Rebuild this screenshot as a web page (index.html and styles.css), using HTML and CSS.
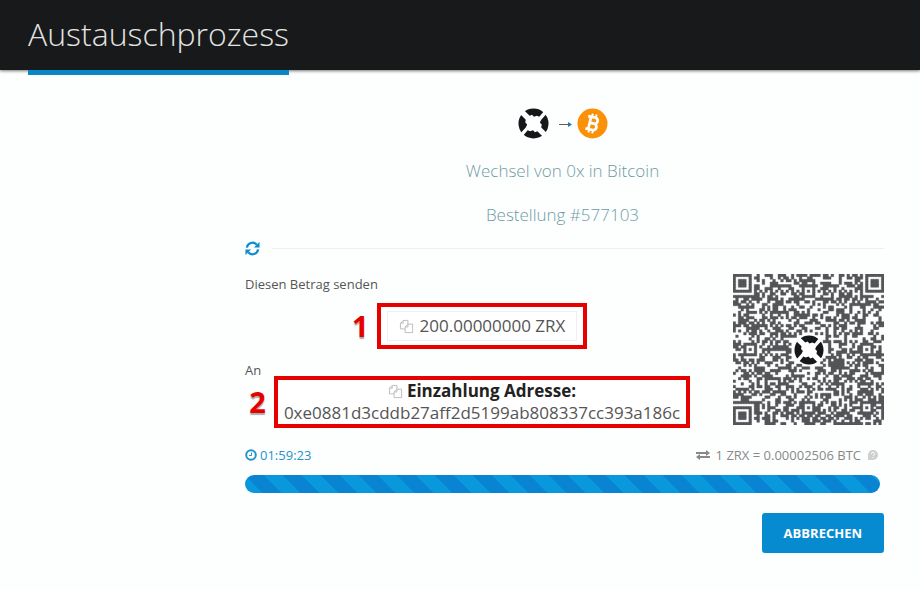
FILE: index.html
```html
<!DOCTYPE html>
<html lang="de">
<head>
  <meta charset="UTF-8">
  <meta name="viewport" content="width=device-width, initial-scale=1.0">
  <title>Austauschprozess</title>
  <link rel="stylesheet" href="styles.css">
</head>
<body>
  <svg class="sprite" aria-hidden="true">
    <symbol id="zrx" viewBox="0 0 32 32">
      <circle cx="16" cy="16" r="15.5" fill="#15181b"/>
      <path fill="#fff" d="M2 6 6 2l6 6 2.500-1 2 2 3-1L22 9l5-6 2.500 3L24 12l-1.500 3 2 2-.5 3L30 26l-4 4-6-6-2.500 1-2-2-3 1L10 23l-5 6-2.500-3L8 20l1.500-3-2-2L8 12z"/>
    </symbol>
    <symbol id="copy" viewBox="0 0 16 16">
      <path fill="#fff" stroke="currentColor" stroke-width="1" d="M4.500 1.500h5v9h-8v-6zM4.500 1.500v3h-3"/>
      <path fill="#fff" stroke="currentColor" stroke-width="1" d="M9.500 5.500h5v9h-8v-6zM9.500 5.500v3h-3"/>
    </symbol>
  </svg>

  <header class="header">
    <h1 class="title">Austauschprozess</h1>
  </header>

  <main class="content">
    <div class="summary">
      <div class="coins">
        <svg class="coin"><use href="#zrx"/></svg>
        <svg class="arrow" viewBox="0 0 13 8"><path fill="none" stroke="#555f68" d="M0 4.500h11"/><path fill="#2377b5" d="M9 2l4 2.500L9 7z"/></svg>
        <svg class="coin" viewBox="0 0 32 32">
          <circle cx="16" cy="16" r="15.500" fill="#fb9108"/>
          <g transform="rotate(13 16 16)" fill="none" stroke="#fff">
            <path stroke-width="2.800" d="M10 9.500h7.500a3 3 0 0 1 0 6.300H13M17.500 15.800a3.300 3.300 0 0 1 0 6.700H10M13 9.500v13"/>
            <path stroke-width="2" d="M14 6v3M18 6v3M14 23v3M18 23v3"/>
          </g>
        </svg>
      </div>
      <p>Wechsel von 0x in Bitcoin</p>
      <p>Bestellung #577103</p>
    </div>

    <div class="divider">
      <button class="refresh" aria-label="Aktualisieren">
        <svg viewBox="0 0 16 16"><path fill="none" stroke="currentColor" stroke-width="2.400" d="M2 7a6 6 0 0 1 10.500-3M14 9a6 6 0 0 1-10.500 3"/><path fill="currentColor" d="M15.500 1v6h-6zM.5 15V9h6z"/></svg>
      </button>
      <span class="rule"></span>
    </div>

    <div class="payment">
      <div class="details">
        <p class="label">Diesen Betrag senden</p>
        <div class="mark">
          <span class="number">1</span>
          <button class="amount"><svg class="copy"><use href="#copy"/></svg>200.00000000 ZRX</button>
        </div>
        <p class="label">An</p>
        <div class="mark address">
          <span class="number">2</span>
          <button class="address-title"><svg class="copy"><use href="#copy"/></svg>Einzahlung Adresse:</button>
          <p>0xe0881d3cddb27aff2d5199ab808337cc393a186c</p>
        </div>
      </div>
      <div class="qr">
        <svg id="qr" viewBox="0 0 57 57" role="img" aria-label="QR"></svg>
        <svg class="qr-logo"><use href="#zrx"/></svg>
      </div>
    </div>

    <div class="status">
      <span class="timer"><svg class="clock" viewBox="0 0 12 12"><circle cx="6" cy="6" r="4.800" fill="none" stroke="currentColor" stroke-width="2"/><path fill="none" stroke="currentColor" d="M6.500 3.500v3H4"/></svg>01:59:23</span>
      <span class="rate">
        <svg class="swap" viewBox="0 0 14 10"><path fill="none" stroke="currentColor" stroke-width="2" d="M0 3h11M3 7h11"/><path fill="currentColor" d="M10 0l4 3-4 3zM4 4 0 7l4 3z"/></svg>
        1 ZRX = 0.00002506 BTC
        <svg class="info" viewBox="0 0 12 12"><path fill="#cfcfcf" d="M6 1a5 5 0 1 1 0 10H1V6a5 5 0 0 1 5-5z"/><path fill="none" stroke="#fff" d="M4.500 5a1.500 1.500 0 1 1 2 1.300L6 7M6 8v1"/></svg>
      </span>
    </div>
    <div class="progress" role="progressbar" aria-label="Restzeit"></div>
    <div class="actions">
      <button class="cancel">ABBRECHEN</button>
    </div>
  </main>

  <script src="qr.js"></script>
</body>
</html>
```
FILE: styles.css
```css
* {
  box-sizing: border-box;
}

body {
  margin: 0;
  background: #fdfffe;
  color: #555;
  font-family: 'Open Sans', sans-serif;
  font-size: 13px;
  line-height: 20px;
}

p {
  margin: 0;
}

svg {
  display: block;
  flex: none;
}

button {
  border: none;
  padding: 0;
  background: none;
  color: inherit;
  font: inherit;
  cursor: pointer;
}

.sprite {
  width: 0;
  height: 0;
  position: absolute;
}

.header {
  display: flex;
  height: 70px;
  padding: 0 28px;
  background: #17191a;
  box-shadow: 0 1px 3px #777;
}

.title {
  height: 75px;
  margin: 0;
  border-bottom: 5px solid #0a86c4;
  color: #e4e4e2;
  font-size: 32px;
  font-weight: 300;
  line-height: 68px;
}

.content {
  padding: 38px 36px 0 245px;
}

.summary {
  display: flex;
  flex-direction: column;
  align-items: center;
  gap: 20px;
  padding-right: 4px;
  color: #6f9aa5;
  font-size: 17px;
  font-weight: 300;
  line-height: 24px;
}

.coins {
  display: flex;
  align-items: center;
  height: 31px;
}

.coin {
  width: 31px;
  height: 31px;
}

.arrow {
  width: 13px;
  height: 8px;
  margin: 0 5px 0 10px;
}

.divider {
  display: flex;
  align-items: center;
  gap: 12px;
  margin-top: 14px;
}

.refresh {
  width: 15px;
  height: 15px;
  color: #0a8ccf;
}

.rule {
  flex: 1;
  height: 1px;
  background: #e8eff5;
}

.payment {
  display: flex;
  gap: 14px;
  margin-top: 18px;
}

.details {
  display: flex;
  flex: 1;
  flex-direction: column;
  align-items: center;
}

.label {
  align-self: stretch;
}

.mark {
  position: relative;
  margin: 9px 0 11px;
  padding: 4px 6px;
  border: 4px solid #e60000;
  background: #fff;
}

.number {
  position: absolute;
  right: 100%;
  top: 50%;
  margin-right: 12px;
  transform: translateY(-50%);
  color: #e60000;
  font-size: 29px;
  font-weight: 700;
  text-shadow: 0 2px 1px #aaa, 0 0 2px #fff;
}

.amount {
  display: flex;
  align-items: center;
  gap: 6px;
  height: 30px;
  padding: 0 11px;
  border: 1px solid #edf0f3;
  font-size: 17px;
}

.copy {
  width: 15px;
  height: 15px;
  color: #bbb;
}

.address {
  display: flex;
  flex-direction: column;
  align-items: center;
  margin: -4px 0 0;
  padding: 0 6px;
  font-size: 17px;
  line-height: 22px;
}

.address-title {
  display: flex;
  align-items: center;
  gap: 4px;
  color: #222;
  font-weight: 700;
}

.qr {
  display: grid;
  place-items: center;
  align-self: flex-start;
  width: 151px;
}

.qr svg {
  grid-area: 1 / 1;
}

.qr-logo {
  width: 30px;
  height: 30px;
}

.status {
  display: flex;
  justify-content: space-between;
  margin-top: 17px;
  padding-right: 5px;
  color: #888;
}

.timer,
.rate {
  display: flex;
  align-items: center;
}

.timer {
  gap: 3px;
  color: #2494c8;
}

.rate {
  gap: 6px;
}

.clock,
.info {
  width: 12px;
  height: 12px;
}

.swap {
  width: 14px;
  height: 10px;
}

.progress {
  height: 18px;
  margin: 10px 4px 0 0;
  border-radius: 9px;
  background: #0a98dc linear-gradient(45deg, #0984d3 25%, transparent 25%, transparent 50%, #0984d3 50%, #0984d3 75%, transparent 75%) 0 0 / 38px 38px;
}

.actions {
  display: flex;
  justify-content: flex-end;
  margin-top: 20px;
}

.cancel {
  padding: 10px 22px;
  border-radius: 3px;
  background: #078bd0;
  color: #fff;
  font-weight: 700;
}
```
FILE: qr.js
```js
const size = 57;
const centers = [6, 28, 50];
let seed = 577103;

function random() {
  seed = (seed * 1103515245 + 12345) % 2147483648;
  return seed / 2147483648;
}

// concentric squares: 7x7 in three corners, 5x5 at the alignment points
function moduleAt(x, y) {
  for (const [cx, cy] of [[3, 3], [size - 4, 3], [3, size - 4]]) {
    const d = Math.max(Math.abs(x - cx), Math.abs(y - cy));
    if (d <= 4) return d === 3 || d <= 1;
  }
  if (Math.hypot(x - 28, y - 28) < 6.5) return false;
  for (const cx of centers) {
    for (const cy of centers) {
      const d = Math.max(Math.abs(x - cx), Math.abs(y - cy));
      if (d <= 2) return d !== 1;
    }
  }
  if (x === 6 || y === 6) return (x + y) % 2 === 0;
  return random() < 0.5;
}

let path = '';
for (let y = 0; y < size; y++) {
  for (let x = 0; x < size; x++) {
    if (moduleAt(x, y)) path += `M${x} ${y}h1v1h-1z`;
  }
}

document.getElementById('qr').innerHTML =
  `<path fill="#55575a" stroke="#55575a" stroke-width="0.15" stroke-linejoin="round" d="${path}"/>`;
```
